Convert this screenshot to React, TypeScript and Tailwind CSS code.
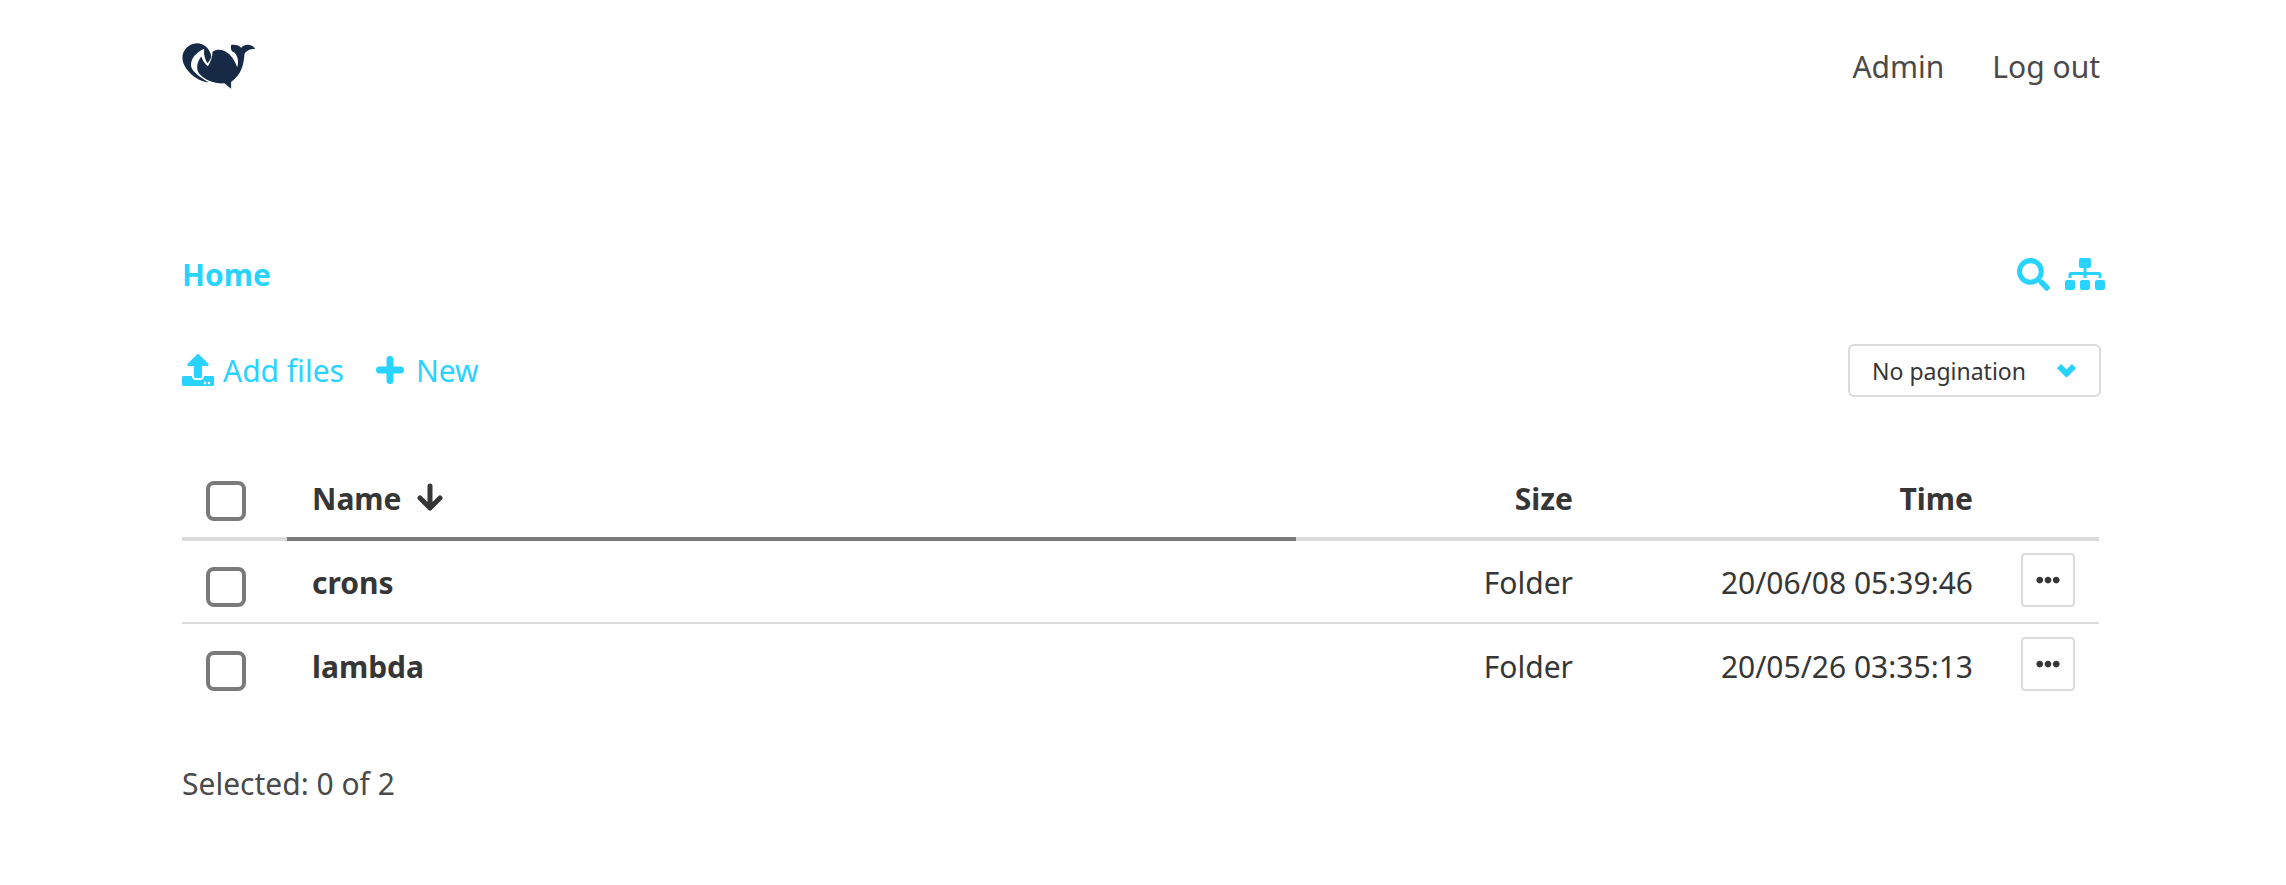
import React from "react";
import { FaSearch, FaSitemap, FaEllipsisH, FaUpload } from "react-icons/fa";

const font = { fontFamily: '"Noto Sans", "Open Sans", sans-serif' };

function Logo() {
  return (
    <svg viewBox="70 65 220 140" className="w-[74px] h-[47px]" fill="#172a45">
      <path d="M157 108 C154 86 136 69 114 69 C90 70 71 90 71 112 C71 136 92 160 112 172 C124 180 136 184 150 185 C130 174 110 160 100 146 C90 128 102 100 136 85 C134 100 138 118 146 128 C151 122 155 116 157 108 Z" />
      <path d="M161 94 C180 80 206 92 220 112 C228 124 232 134 234 140 C240 125 236 106 226 96 C216 94 214 84 216 74 C226 71 240 74 246 82 C256 70 278 70 288 86 C276 84 262 90 256 100 C254 130 248 162 216 184 L216 204 L196 188 C170 190 140 180 122 160 C112 148 112 128 127 108 C130 118 138 130 147 137 C155 125 160 110 161 94 Z" />
    </svg>
  );
}

function Box() {
  return <span className="block w-10 h-10 rounded-[8px] border-[4px] border-[#7a7a7a] bg-white" />;
}

function Row({ name, time, last }: { name: string; time: string; last?: boolean }) {
  return (
    <div className={`flex items-center h-[83px] ${last ? "" : "border-b-2 border-[#dbdbdb]"}`}>
      <div className="w-[104px] pl-6 pt-[10px] shrink-0"><Box /></div>
      <div className="flex-1 pl-[26px] pt-[2px] font-bold">{name}</div>
      <div className="w-[200px] text-right pt-[2px]">Folder</div>
      <div className="w-[400px] text-right pt-[2px]">{time}</div>
      <div className="w-[126px] shrink-0 flex pl-[48px] pb-[3px]">
        <button className="w-[54px] h-[54px] border-2 border-[#dbdbdb] rounded-[4px] flex items-center justify-center text-[#363636]">
          <FaEllipsisH size={24} />
        </button>
      </div>
    </div>
  );
}

export default function App() {
  return (
    <div className="min-h-[885px] bg-white text-[#363636] text-[30px] pl-[182px] pr-[186px]" style={font}>
      <header className="flex items-start justify-between h-[230px] pt-[42px]">
        <Logo />
        <nav className="flex gap-[48px] text-[#4a4a4a] leading-[50px]">
          <span>Admin</span>
          <span>Log out</span>
        </nav>
      </header>

      <div className="flex items-center justify-between h-[88px] text-[#29d3ff]">
        <span className="font-bold">Home</span>
        <div className="flex items-center gap-[15px] -mr-[5px]">
          <FaSearch size={33} />
          <FaSitemap size={40} />
        </div>
      </div>

      <div className="flex items-center justify-between h-[72px] mt-[16px] text-[#29d3ff]">
        <div className="flex items-center">
          <FaUpload size={32} />
          <span className="ml-[9px]">Add files</span>
          <svg viewBox="0 0 28 28" className="w-7 h-7 ml-[32px]" fill="none" stroke="currentColor" strokeWidth="7" strokeLinecap="round">
            <path d="M14 3.5V24.5M3.5 14H24.5" />
          </svg>
          <span className="ml-[12px]">New</span>
        </div>
        <div className="w-[253px] h-[53px] -mr-px border-2 border-[#dbdbdb] rounded-[6px] flex items-center justify-between pl-[22px] pr-[23px] text-[#363636] text-[23px]">
          <span className="pt-[2px]">No pagination</span>
          <svg viewBox="0 0 19 14" className="w-[19px] h-[14px] text-[#29d3ff]" fill="none" stroke="currentColor" strokeWidth="6">
            <path d="M2 3L9.5 10.5L17 3" />
          </svg>
        </div>
      </div>

      <div className="mt-[57px] w-[1917px]">
        <div className="flex items-center h-[78px] font-bold relative border-b-4 border-[#dbdbdb]">
          <div className="w-[104px] pl-6 pt-[2px] shrink-0"><Box /></div>
          <div className="flex-1 pl-[26px] flex items-center gap-[14px] -mt-[4px]">
            <span>Name</span>
            <svg viewBox="0 0 28 28" className="w-7 h-7 -mt-[3px]" fill="none" stroke="currentColor" strokeWidth="5" strokeLinecap="round" strokeLinejoin="round">
              <path d="M14 3V25M4 15L14 25L24 15" />
            </svg>
          </div>
          <div className="w-[200px] text-right -mt-[4px]">Size</div>
          <div className="w-[400px] text-right -mt-[4px]">Time</div>
          <div className="w-[126px] shrink-0" />
          <div className="absolute left-[105px] w-[1009px] -bottom-1 h-1 bg-[#7a7a7a]" />
        </div>
        <Row name="crons" time="20/06/08 05:39:46" />
        <Row name="lambda" time="20/05/26 03:35:13" last />
      </div>

      <div className="mt-[54px] text-[#4a4a4a]">Selected: 0 of 2</div>
    </div>
  );
}
